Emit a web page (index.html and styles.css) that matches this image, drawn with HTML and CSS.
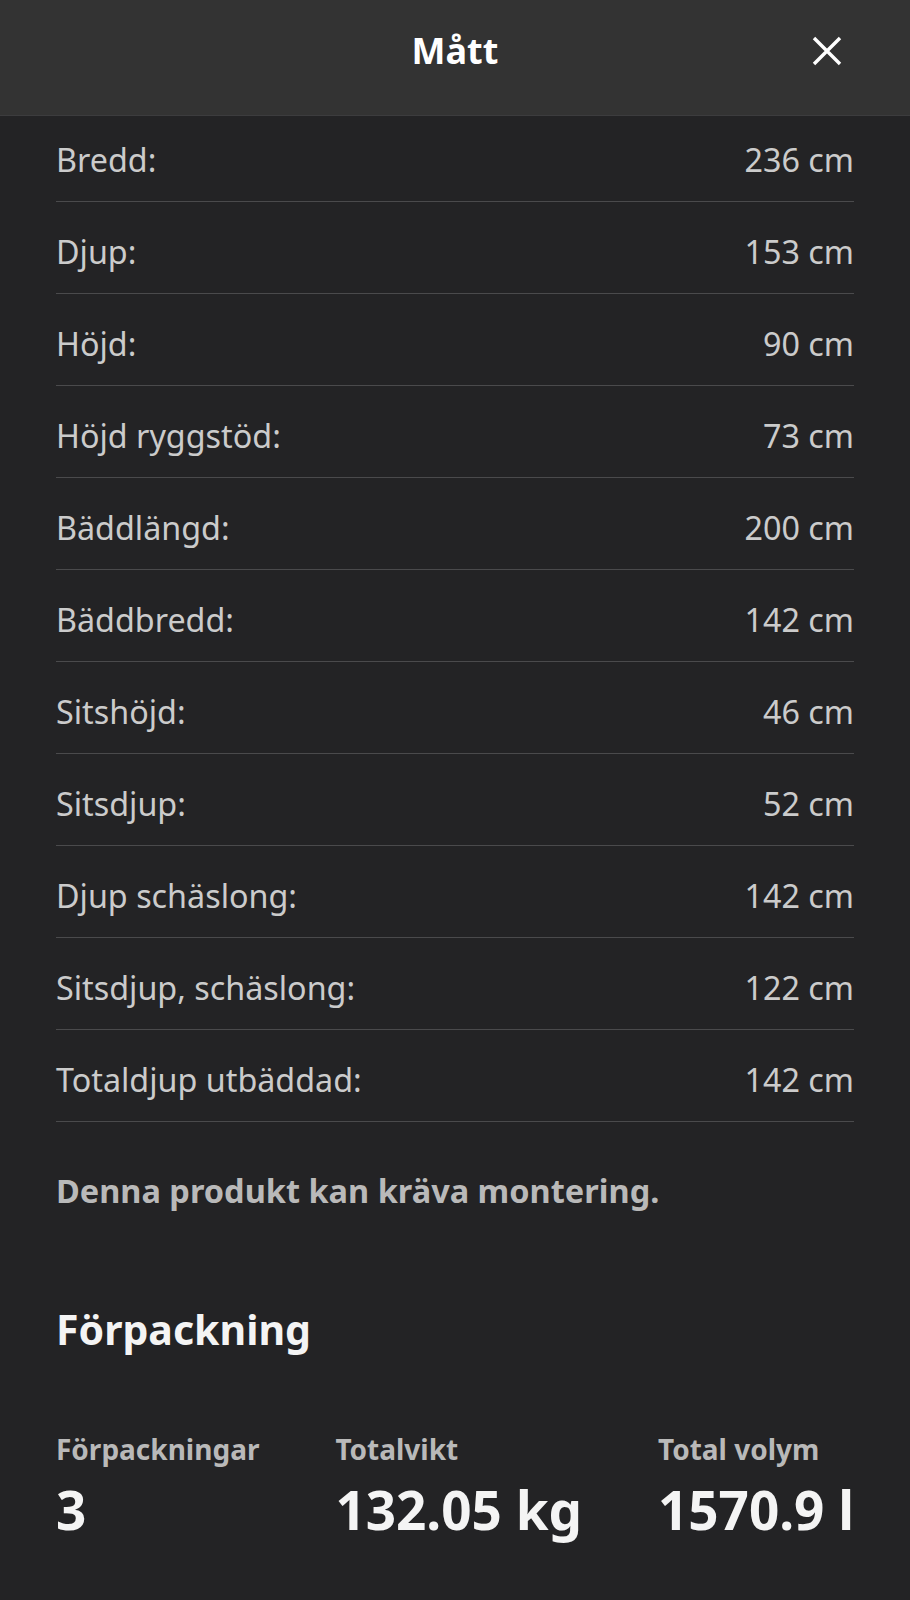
FILE: index.html
```html
<!DOCTYPE html>
<html lang="sv">
<head>
  <meta charset="UTF-8" />
  <meta name="viewport" content="width=device-width, initial-scale=1.0"/>
  <title>Mått</title>
  <link rel="stylesheet" href="styles.css">
</head>
<body>
  <div class="sheet">
    <header class="sheet-header">
      <h1>Mått</h1>
      <button class="close-btn" aria-label="Stäng">
        <svg width="30" height="30" viewBox="0 0 30 30">
          <path d="M2 2 L28 28 M28 2 L2 28" stroke="#fff" stroke-width="3.4" fill="none"/>
        </svg>
      </button>
    </header>

    <div class="sheet-body">
      <div class="specs">
        <div class="spec-row"><span>Bredd:</span><span>236 cm</span></div>
        <div class="spec-row"><span>Djup:</span><span>153 cm</span></div>
        <div class="spec-row"><span>Höjd:</span><span>90 cm</span></div>
        <div class="spec-row"><span>Höjd ryggstöd:</span><span>73 cm</span></div>
        <div class="spec-row"><span>Bäddlängd:</span><span>200 cm</span></div>
        <div class="spec-row"><span>Bäddbredd:</span><span>142 cm</span></div>
        <div class="spec-row"><span>Sitshöjd:</span><span>46 cm</span></div>
        <div class="spec-row"><span>Sitsdjup:</span><span>52 cm</span></div>
        <div class="spec-row"><span>Djup schäslong:</span><span>142 cm</span></div>
        <div class="spec-row"><span>Sitsdjup, schäslong:</span><span>122 cm</span></div>
        <div class="spec-row"><span>Totaldjup utbäddad:</span><span>142 cm</span></div>
      </div>

      <p class="note">Denna produkt kan kräva montering.</p>

      <h2>Förpackning</h2>

      <div class="package">
        <div class="package-item">
          <div class="package-label">Förpackningar</div>
          <div class="package-value">3</div>
        </div>
        <div class="package-item">
          <div class="package-label">Totalvikt</div>
          <div class="package-value">132.05 kg</div>
        </div>
        <div class="package-item">
          <div class="package-label">Total volym</div>
          <div class="package-value">1570.9 l</div>
        </div>
      </div>
    </div>
  </div>
</body>
</html>
```

FILE: styles.css
```css
* {
  margin: 0;
  padding: 0;
  box-sizing: border-box;
}
body {
  font-family: 'Noto Sans', 'Open Sans', sans-serif;
  background: #232325;
  color: #cfcfcf;
  min-height: 1600px;
}
.sheet-header {
  position: relative;
  height: 116px;
  background: #333333;
  border-bottom: 1px solid #3c3c3e;
  display: flex;
  align-items: center;
  justify-content: center;
}
.sheet-header h1 {
  font-size: 36px;
  font-weight: 700;
  color: #ffffff;
  margin-top: -14px;
}
.close-btn {
  position: absolute;
  right: 68px;
  top: 36px;
  width: 30px;
  height: 30px;
  border: none;
  background: none;
  cursor: pointer;
}
.sheet-body {
  padding: 0 56px;
}
.spec-row {
  display: flex;
  justify-content: space-between;
  align-items: center;
  height: 92px;
  padding-top: 6px;
  border-bottom: 1px solid #4a4a4c;
  font-size: 32.3px;
  color: #cbcbcb;
}
.spec-row:first-child {
  height: 86px;
  padding-top: 0;
}
.note {
  margin-top: 46px;
  font-size: 32.5px;
  font-weight: 700;
  color: #b9b9b9;
}
.sheet-body h2 {
  margin-top: 88px;
  font-size: 41px;
  font-weight: 700;
  color: #f4f4f4;
}
.package {
  display: flex;
  justify-content: space-between;
  margin-top: 73px;
}
.package-label {
  font-size: 28px;
  font-weight: 700;
  color: #b9b9b9;
}
.package-value {
  margin-top: 10px;
  font-size: 53px;
  font-weight: 700;
  color: #f4f4f4;
  line-height: 1.2;
}
```
